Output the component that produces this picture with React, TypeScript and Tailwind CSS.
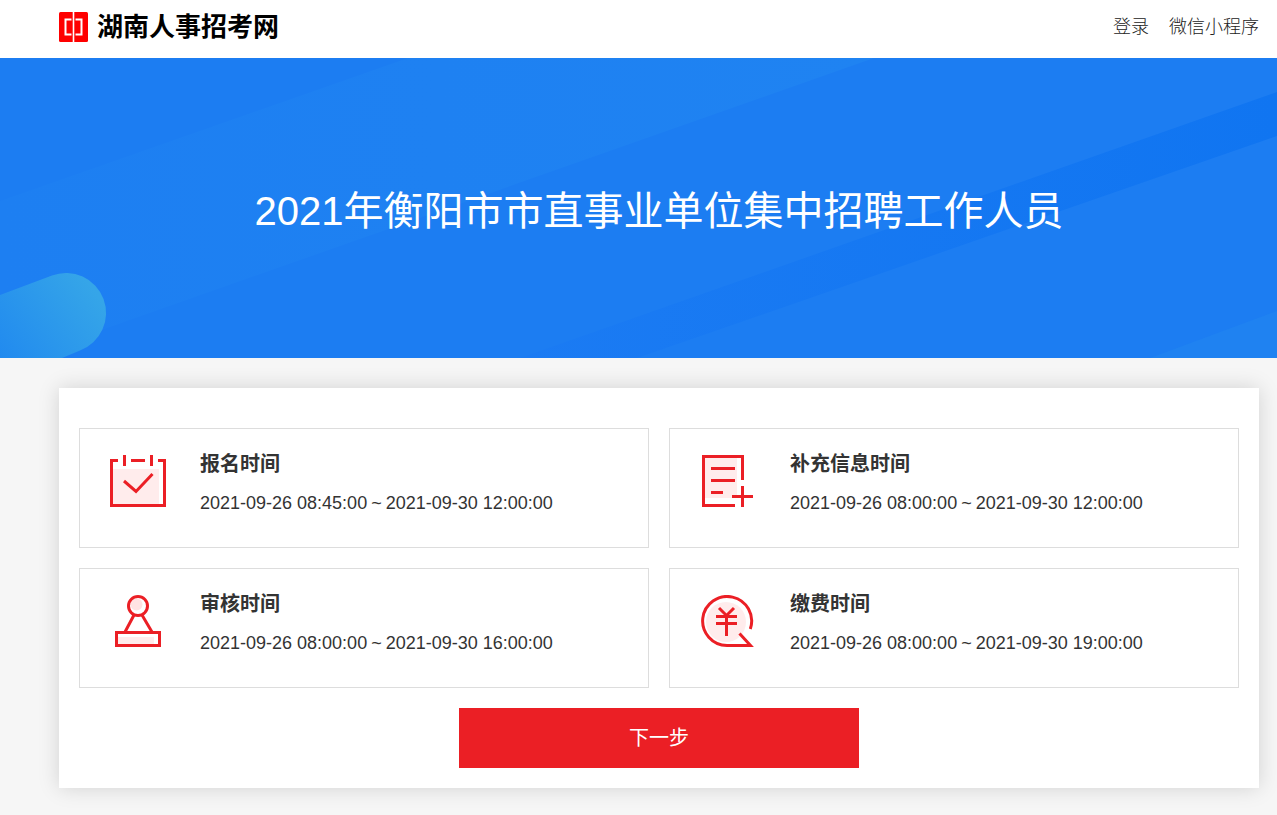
import React from 'react';

interface ScheduleItem {
  title: string;
  start: string;
  end: string;
  icon: React.ReactNode;
}

const iconProps = {
  viewBox: '0 0 60 52',
  fill: 'none',
  stroke: '#eb1f25',
  strokeWidth: 3,
  className: 'h-[52px] w-[60px] shrink-0',
  'aria-hidden': true,
};

function CalendarIcon() {
  return (
    <svg {...iconProps}>
      <path d="M3 14H49V49H3Z" fill="#ffecec" stroke="none" />
      <path d="M8 5.5H1.5V50.5H54.5V5.5H48M21 5.5H35M14.5 0V11M41.5 0V11" />
      <path d="M14 26L26 36.5L42.5 19" />
    </svg>
  );
}

function FormIcon() {
  return (
    <svg {...iconProps}>
      <path d="M5 3H37V43H5Z" fill="#ffecec" stroke="none" />
      <path d="M35 50.5H3.5V1.5H42.5V25" />
      <path d="M11 13.5H35M11 25.5H35M11 37.5H23" />
      <path d="M42.5 31V52M32 41.5H53" />
    </svg>
  );
}

function StampIcon() {
  return (
    <svg {...iconProps}>
      <circle cx="26.5" cy="9.5" r="6" fill="#ffe3e3" stroke="none" />
      <path d="M8 42H44V49H8Z" fill="#ffecec" stroke="none" />
      <circle cx="28" cy="11" r="9.5" />
      <path d="M24 20L15 37M32 20L42 37" />
      <path d="M6.5 37.5H49.5V50.5H6.5Z" />
    </svg>
  );
}

function PaymentIcon() {
  return (
    <svg {...iconProps}>
      <circle cx="26" cy="27" r="20" fill="#ffecec" stroke="none" />
      <path d="M50.3 34A24.5 24.5 0 1 0 27 50.5H50.5L39.5 38.5" />
      <path d="M19 13L26.5 20.5L34 13M16 21.5H37M16 28.5H37M26.5 20V41" />
    </svg>
  );
}

const schedule: ScheduleItem[] = [
  { title: '报名时间', start: '2021-09-26 08:45:00', end: '2021-09-30 12:00:00', icon: <CalendarIcon /> },
  { title: '补充信息时间', start: '2021-09-26 08:00:00', end: '2021-09-30 12:00:00', icon: <FormIcon /> },
  { title: '审核时间', start: '2021-09-26 08:00:00', end: '2021-09-30 16:00:00', icon: <StampIcon /> },
  { title: '缴费时间', start: '2021-09-26 08:00:00', end: '2021-09-30 19:00:00', icon: <PaymentIcon /> },
];

function Logo() {
  return (
    <svg viewBox="0 0 29 30" className="h-[30px] w-[29px]" aria-hidden="true">
      <rect width="29" height="30" rx="1.5" fill="#fe0000" />
      <path d="M14.5 0V30" stroke="#fff" strokeWidth="1.6" />
      <path d="M12.5 7.5H6.5V22.5H12.5M16.5 7.5H22.5V22.5H16.5" fill="none" stroke="#fff" strokeWidth="2" />
    </svg>
  );
}

function Header() {
  return (
    <header className="h-[58px] bg-white pr-[18px] pl-[59px]">
      <div className="mx-auto flex h-[54px] max-w-[1200px] items-center justify-between">
        <a href="#" className="flex items-center gap-[9px] text-[26px] leading-8 font-bold text-black">
          <Logo />
          <span>湖南人事招考网</span>
        </a>
        <nav className="flex gap-5 text-lg font-light text-[#222]">
          <a href="#">登录</a>
          <a href="#">微信小程序</a>
        </nav>
      </div>
    </header>
  );
}

function BannerArt() {
  return (
    <svg
      viewBox="0 0 1277 300"
      preserveAspectRatio="xMidYMid slice"
      className="absolute inset-0 h-full w-full"
      aria-hidden="true"
    >
      <defs>
        <linearGradient id="band" x1="0" x2="1">
          <stop offset="0" stopColor="#1b7bf3" />
          <stop offset="1" stopColor="#1075f1" />
        </linearGradient>
        <linearGradient id="sheen" x1="0" x2="1">
          <stop offset="0" stopColor="#1d7ff2" />
          <stop offset="1" stopColor="#1f83f2" />
        </linearGradient>
        <linearGradient id="pill" x1="0" y1="1" x2="1" y2="0.4">
          <stop offset="0" stopColor="#218aef" />
          <stop offset="1" stopColor="#35a5e8" />
        </linearGradient>
      </defs>
      <path d="M0 0H1277V300H0Z" fill="#1c7df2" />
      <path d="M408 0H874L22 300H0V143Z" fill="url(#sheen)" />
      <path d="M1277 34V78L637 300H520Z" fill="url(#band)" />
      <path d="M1277 253V300H1150Z" fill="#1f82f1" />
      <path d="M0 237L52 217.5A40 40 0 1 1 80 292.5L62 300H0Z" fill="url(#pill)" />
    </svg>
  );
}

function ScheduleCard({ title, start, end, icon }: ScheduleItem) {
  return (
    <li className="flex h-[120px] gap-[30px] border border-[#ddd] pt-[26px] pl-[30px]">
      {icon}
      <div className="-mt-2 text-[#333]">
        <h2 className="text-xl leading-[34px] font-bold">{title}</h2>
        <p className="mt-1.5 flex gap-1 text-lg leading-8">
          <span>{start}</span>
          <span>~</span>
          <span>{end}</span>
        </p>
      </div>
    </li>
  );
}

export default function App() {
  return (
    <div className="min-h-screen bg-[#f6f6f6] font-['Liberation_Sans','Noto_Sans_CJK_SC',sans-serif]">
      <Header />
      <section className="relative flex h-[300px] items-center justify-center overflow-hidden pt-1.5 pr-[18px] pl-[59px]">
        <BannerArt />
        <h1 className="relative text-[40px] leading-[60px] text-white">2021年衡阳市市直事业单位集中招聘工作人员</h1>
      </section>
      <main className="py-[30px] pr-[18px] pl-[59px]">
        <div className="mx-auto max-w-[1200px] bg-white px-5 pt-10 pb-5 shadow-[0_0_20px_rgba(0,0,0,0.15)]">
          <ul className="grid grid-cols-2 gap-5">
            {schedule.map((item) => (
              <ScheduleCard key={item.title} {...item} />
            ))}
          </ul>
          <button
            type="button"
            className="mx-auto mt-5 block h-[60px] w-[400px] bg-[#eb1f25] text-xl text-white"
          >
            下一步
          </button>
        </div>
      </main>
    </div>
  );
}
